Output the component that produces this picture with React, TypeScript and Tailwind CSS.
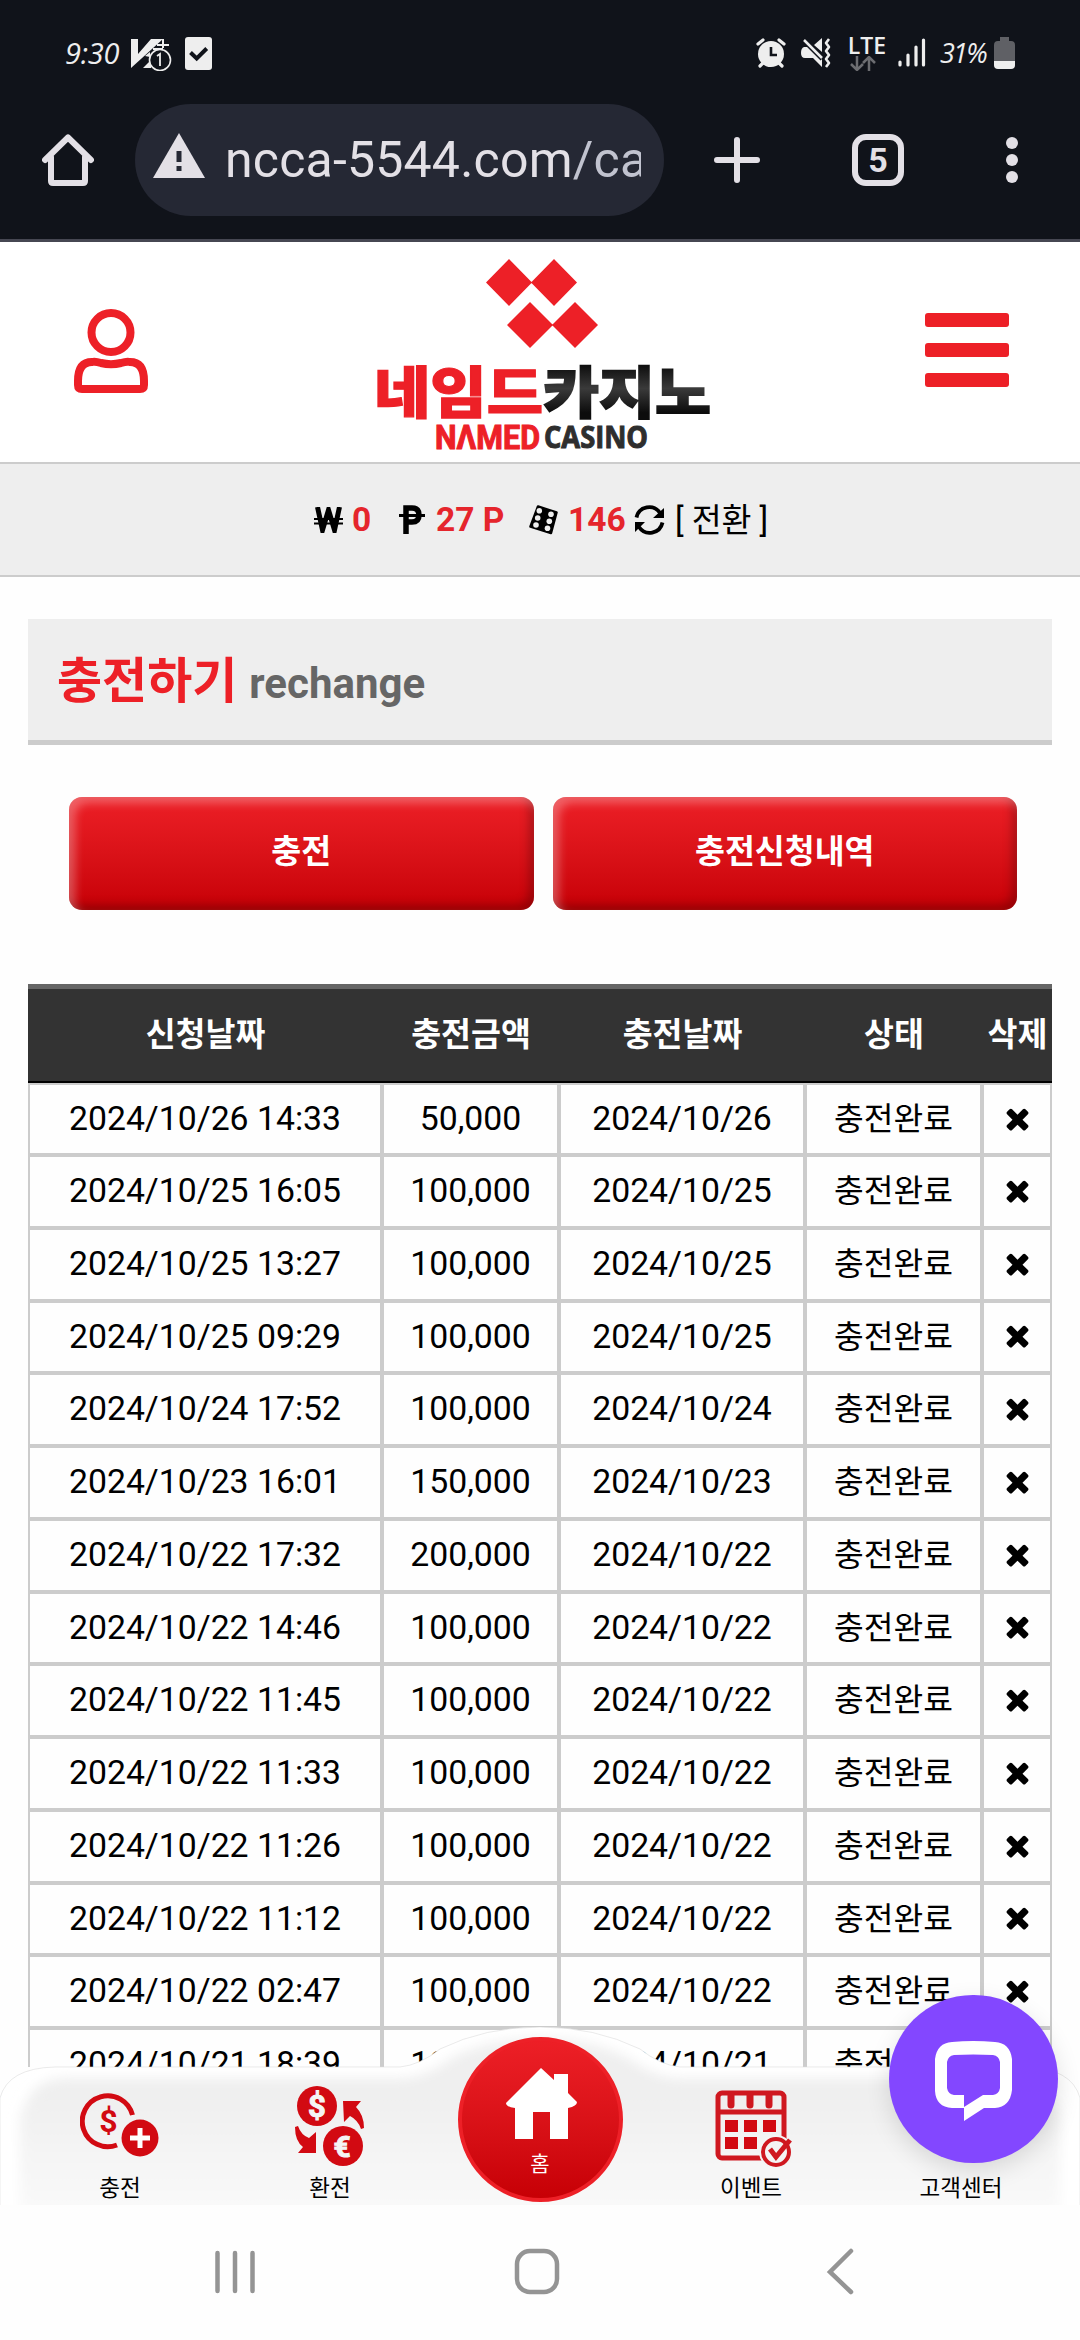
import React from "react";

const rows = [
  ["2024/10/26 14:33", "50,000", "2024/10/26"],
  ["2024/10/25 16:05", "100,000", "2024/10/25"],
  ["2024/10/25 13:27", "100,000", "2024/10/25"],
  ["2024/10/25 09:29", "100,000", "2024/10/25"],
  ["2024/10/24 17:52", "100,000", "2024/10/24"],
  ["2024/10/23 16:01", "150,000", "2024/10/23"],
  ["2024/10/22 17:32", "200,000", "2024/10/22"],
  ["2024/10/22 14:46", "100,000", "2024/10/22"],
  ["2024/10/22 11:45", "100,000", "2024/10/22"],
  ["2024/10/22 11:33", "100,000", "2024/10/22"],
  ["2024/10/22 11:26", "100,000", "2024/10/22"],
  ["2024/10/22 11:12", "100,000", "2024/10/22"],
  ["2024/10/22 02:47", "100,000", "2024/10/22"],
  ["2024/10/21 18:39", "100,000", "2024/10/21"],
];

const cols = "grid grid-cols-[354px_177px_246px_177px_70px]";

function StatusBar() {
  return (
    <div className="flex h-[104px] items-start justify-between pl-[65px] pr-[65px] pt-[36px] text-[#eee]">
      <div className="flex items-start">
        <span className="mt-[1px] w-[66px] font-['Open_Sans','Roboto',sans-serif] text-[29px] italic leading-[32px] tracking-[-0.2px]">9:30</span>
        <svg width="42" height="34" viewBox="0 0 42 34" className="mt-[1px]">
          <path d="M0 2h7v15L20 2h12L0 31z" fill="#eee" />
          <path d="M12 31l8-8v8zM14 19l5-4v5z" fill="#eee" />
          <path d="M32 2v9M26 8h12M22 12h10" stroke="#eee" strokeWidth="2" />
          <circle cx="29" cy="23" r="10.500" fill="#10131a" stroke="#eee" strokeWidth="1.600" />
          <path d="M26 19l3-2v12" stroke="#eee" strokeWidth="1.800" fill="none" />
        </svg>
        <svg width="27" height="34" viewBox="0 0 27 34" className="ml-[12px] mt-[1px]">
          <rect width="27" height="33" rx="3" fill="#eee" />
          <path d="M5.500 15.500l6.200 6 10-10" stroke="#10131a" strokeWidth="4" fill="none" />
        </svg>
      </div>
      <div className="flex items-start">
        <svg width="30" height="30" viewBox="0 0 30 30" className="mt-[2px]">
          <circle cx="15" cy="16" r="13" fill="#eee" />
          <path d="M2 6l5-4M28 6l-5-4M4 28l3-3M26 28l-3-3" stroke="#eee" strokeWidth="3.200" strokeLinecap="round" />
          <path d="M15 9v8h6" stroke="#10131a" strokeWidth="2.600" fill="none" />
        </svg>
        <svg width="31" height="30" viewBox="0 0 31 30" className="ml-[15px] mt-[2px]">
          <path d="M3 9h6l12 12v8l-9-9H4q-4 0-4-5t3-6zM13 7l8-7v14z" fill="#eee" />
          <path d="M2 2l19 19" stroke="#10131a" strokeWidth="4" />
          <path d="M3 2l18 18" stroke="#eee" strokeWidth="2.500" />
          <path d="M28 1l-3 4 3 4-3 4 3 4-3 4 3 4-3 4" stroke="#eee" strokeWidth="2.600" fill="none" strokeLinejoin="round" />
        </svg>
        <div className="ml-[15px] w-[40px] text-center">
          <div className="font-['Open_Sans','Roboto',sans-serif] text-[23px] font-semibold leading-[18px]">LTE</div>
          <svg width="28" height="15" viewBox="0 0 28 15" className="ml-[3px] mt-[2px]" fill="none" stroke="#6c6d71" strokeWidth="2.500">
            <path d="M7 0v13M1 8l6 6 6-6M19 15V2M13 7l6-6 6 6" />
          </svg>
        </div>
        <svg width="28" height="32" viewBox="0 0 28 32" className="ml-[11px]" stroke="#eee" strokeWidth="3.200" strokeLinecap="round">
          <path d="M2 26v3M10 19v10M18 11v18M25.500 4v25" />
        </svg>
        <span className="ml-[14px] mt-[1px] w-[54px] font-['Open_Sans','Roboto',sans-serif] text-[27px] italic leading-[32px] tracking-[-1.8px]">31%</span>
        <svg width="21" height="32" viewBox="0 0 21 32" className="mt-[1px]">
          <path d="M6 0h9v4h2q4 0 4 4v19q0 4-4 4H4q-4 0-4-4V8q0-4 4-4h2z" fill="#5f6065" />
          <path d="M0 24h21v4q0 4-4 4H4q-4 0-4-4z" fill="#eee" />
        </svg>
      </div>
    </div>
  );
}

function BrowserBar() {
  return (
    <div className="flex h-[135px] items-start text-[#e3e0e6]">
      <svg width="52" height="52" viewBox="0 0 52 52" className="ml-[42px] mt-[30px]" fill="none" stroke="currentColor" strokeWidth="6" strokeLinecap="round" strokeLinejoin="round">
        <path d="M3 26L26 3.500 49 26M9 23v24q0 2 2 2h30q2 0 2-2V23" />
      </svg>
      <div className="ml-[41px] flex h-[112px] w-[529px] items-center rounded-full bg-[#252834] pl-[18px]">
        <svg width="52" height="46" viewBox="0 0 52 46" className="mb-[8px]">
          <path d="M26 0l26 45H0z" fill="currentColor" />
          <path d="M26 18v11M26 33v5" stroke="#252834" strokeWidth="5" />
        </svg>
        <div className="ml-[20px] w-[416px] overflow-hidden whitespace-nowrap font-['Roboto',sans-serif] text-[50px] leading-[64px] tracking-[0.2px]">
          ncca-5544.com<span className="text-[#c1c3cf]">/ca</span>
        </div>
      </div>
      <svg width="46" height="46" viewBox="0 0 46 46" className="ml-[50px] mt-[33px]" stroke="currentColor" strokeWidth="6" strokeLinecap="round">
        <path d="M23 3v40M3 23h40" />
      </svg>
      <div className="ml-[92px] mt-[30px] flex h-[52px] w-[52px] items-center justify-center rounded-[14px] border-[6px] border-[#e3e0e6] font-['Roboto',sans-serif] text-[34px] font-bold">5</div>
      <div className="ml-[102px] mt-[33px] flex flex-col gap-[5px]">
        <i className="h-3 w-3 rounded-full bg-[#e3e0e6]" />
        <i className="h-3 w-3 rounded-full bg-[#e3e0e6]" />
        <i className="h-3 w-3 rounded-full bg-[#e3e0e6]" />
      </div>
    </div>
  );
}

function Logo() {
  return (
    <svg width="344" height="208" viewBox="0 0 344 208" fontFamily="'Noto Sans CJK KR', sans-serif">
      <defs>
        <linearGradient id="ink" x1="0" y1="0" x2="0" y2="1">
          <stop offset="0.200" stopColor="#0c0c0c" />
          <stop offset="0.500" stopColor="#3a3a3a" />
          <stop offset="0.800" stopColor="#0c0c0c" />
        </linearGradient>
      </defs>
      <path d="M139 7l23 23.500-23 23.500-23-23.500zM184 7l23 23.500-23 23.500-23-23.500zM160 50l23 23-23 23-23-23zM205 50l23 23-23 23-23-23z" fill="#ed2027" />
      <text x="4" y="161" fontSize="56" fontWeight="900" textLength="169" lengthAdjust="spacingAndGlyphs" fill="#ed2027" stroke="#ed2027" strokeWidth="1.200">네임드</text>
      <text x="173" y="161" fontSize="56" fontWeight="900" textLength="168" lengthAdjust="spacingAndGlyphs" fill="url(#ink)" stroke="url(#ink)" strokeWidth="1.600">카지노</text>
      <text x="65" y="197" fontSize="33" fontWeight="700" fontFamily="Roboto, sans-serif" textLength="105" lengthAdjust="spacingAndGlyphs" fill="#ed2027" stroke="#ed2027">NΛMED</text>
      <text x="174" y="196" fontSize="30" fontWeight="700" fontFamily="'Open Sans', sans-serif" textLength="104" lengthAdjust="spacingAndGlyphs" fill="#2e2e2e" stroke="#2e2e2e">CASINO</text>
    </svg>
  );
}

function Header() {
  return (
    <header className="flex h-[222px] items-start border-b-2 border-[#ccc] bg-white">
      <svg width="76" height="86" viewBox="0 0 76 86" className="ml-[74px] mt-[66px]" fill="none" stroke="#ed2027" strokeWidth="8">
        <circle cx="37" cy="24.500" r="19.500" />
        <path d="M4 73q0-19 14-19 3-1 9 1 10 2.500 20 0 6-2 9-1 14 0 14 19v4q0 4-4 4H8q-4 0-4-4z" />
      </svg>
      <div className="ml-[220px] mt-[10px]"><Logo /></div>
      <div className="ml-[211px] mt-[71px] flex flex-col gap-[16px]">
        <i className="h-[14px] w-[84px] rounded-[3px] bg-[#ed2027]" />
        <i className="h-[14px] w-[84px] rounded-[3px] bg-[#ed2027]" />
        <i className="h-[14px] w-[84px] rounded-[3px] bg-[#ed2027]" />
      </div>
    </header>
  );
}

function Dice() {
  return (
    <svg width="30" height="30" viewBox="0 0 30 30">
      <path d="M9 1.500l18.500 6L22 28 1.500 21.500z" stroke="#000" strokeWidth="2.500" strokeLinejoin="round" />
      <g fill="#eee">
        <circle cx="10.300" cy="5.700" r="2.800" /><circle cx="8.700" cy="13" r="2.800" /><circle cx="7" cy="20" r="2.800" />
        <circle cx="22" cy="9.300" r="2.800" /><circle cx="20.300" cy="16.300" r="2.800" /><circle cx="18.500" cy="23.300" r="2.800" />
      </g>
    </svg>
  );
}

function Balance() {
  return (
    <div className="flex h-[113px] items-center border-b-2 border-[#ccc] bg-[#eee] pl-[314px] text-[33.5px] leading-[40px]">
      <svg width="29" height="26" viewBox="0 0 29 26" className="mt-[1px]" fill="none" stroke="#000">
        <path d="M3.500 0l5 23 6-20 6 20 5-23" strokeWidth="5" />
        <path d="M0 12h29M0 16.500h29" strokeWidth="2" />
      </svg>
      <b className="ml-[9px] w-[37px] text-[#e5252c]">0</b>
      <svg width="26" height="29" viewBox="0 0 26 29" className="ml-[10px]" fill="none" stroke="#000">
        <path d="M7 29V3h6q7 0 7 7t-7 7H7" strokeWidth="5.500" />
        <path d="M0 10.500h26" strokeWidth="3" />
      </svg>
      <b className="ml-[11px] w-[93px] text-[#e5252c]">27 P</b>
      <Dice />
      <b className="ml-[9px] w-[66px] text-[#e5252c]">146</b>
      <svg width="31" height="30" viewBox="0 0 31 30" fill="none" stroke="#000" strokeWidth="3.800">
        <path d="M2.500 12.500A13 13 0 0 1 26 8M28.500 17.500A13 13 0 0 1 5 22" />
        <path d="M30 3v10H19zM1 27V17h10z" fill="#000" stroke="none" />
      </svg>
      <span className="ml-[10px] mt-[2px] whitespace-pre text-[32.5px]">[ 전환 ]</span>
    </div>
  );
}

function GlossButton({ children }: { children: React.ReactNode }) {
  return (
    <button className="h-[113px] flex-1 rounded-[13px] bg-linear-to-b from-[#ed1f26] to-[#c70005] pb-[3px] text-[32.5px] font-bold text-white shadow-[inset_6px_6px_10px_rgba(255,255,255,0.3),inset_-5px_-5px_10px_rgba(0,0,0,0.25)]">
      {children}
    </button>
  );
}

function HistoryTable() {
  return (
    <div className="mt-[74px] w-[1024px]">
      <div className={`${cols} h-[99px] items-center border-t-[5px] border-b-2 border-t-[#666] border-b-black bg-[#333] text-center text-[32.5px] font-bold text-white`}>
        {["신청날짜", "충전금액", "충전날짜", "상태", "삭제"].map((h) => (
          <div key={h} className="whitespace-nowrap pt-[1px] pl-[1px]">{h}</div>
        ))}
      </div>
      {rows.map(([date, amount, day], i) => (
        <div
          key={date}
          className={`${cols} ${i === 0 ? "h-[72px]" : "h-[72.75px]"} text-center text-[33.75px] leading-[68px] *:border-2 *:border-[#ccc]`}
        >
          <div>{date}</div>
          <div>{amount}</div>
          <div>{day}</div>
          <div className="text-[32.3px]">충전완료</div>
          <div className="flex items-center justify-center pb-[2px]">
            <svg width="33" height="33" viewBox="0 0 1792 1792">
              <path d="M1490 1322q0 40-28 68l-136 136q-28 28-68 28t-68-28l-294-294-294 294q-28 28-68 28t-68-28l-136-136q-28-28-28-68t28-68l294-294-294-294q-28-28-28-68t28-68l136-136q28-28 68-28t68 28l294 294 294-294q28-28 68-28t68 28l136 136q28 28 28 68t-28 68l-294 294 294 294q28 28 28 68z" />
            </svg>
          </div>
        </div>
      ))}
    </div>
  );
}

function TabShape() {
  const d = "M0 180V71Q8 41 55 40H400Q420 38 440 22 485 0 540 0T640 22Q660 38 680 40H1025Q1072 41 1080 71V180z";
  return (
    <svg width="1080" height="178" viewBox="0 0 1080 178" className="absolute inset-0">
      <defs>
        <linearGradient id="bar" x1="0" y1="0" x2="0" y2="1">
          <stop offset="0.300" stopColor="#efefef" />
          <stop offset="1" stopColor="#fafafa" />
        </linearGradient>
        <filter id="soft" x="-5%" y="-10%" width="110%" height="120%">
          <feGaussianBlur stdDeviation="6" />
        </filter>
        <clipPath id="edge"><path d={d} /></clipPath>
      </defs>
      <path d={d} fill="#fff" stroke="#dcdcdc" strokeWidth="0.600" />
      <g clipPath="url(#edge)">
        <path d="M20 190V92Q28 54 62 51H405Q430 48 450 32 490 11 540 11T630 32Q650 48 675 51H1018Q1052 54 1060 92V190z" fill="url(#bar)" filter="url(#soft)" />
      </g>
    </svg>
  );
}

function DepositIcon() {
  return (
    <svg width="80" height="66" viewBox="0 0 80 66">
      <path d="M52.500 22A25.500 25.500 0 1 0 37 52" fill="none" stroke="#d20a12" strokeWidth="5" />
      <text x="28.500" y="39" textAnchor="middle" fontFamily="Roboto, sans-serif" fontWeight="700" fontSize="32" fill="#d20a12">$</text>
      <circle cx="60" cy="45" r="18.500" fill="#d20a12" />
      <path d="M60 35v20M50 45h20" stroke="#fff" strokeWidth="5" />
    </svg>
  );
}

function ExchangeIcon() {
  return (
    <svg width="70" height="80" viewBox="0 0 70 80" fill="#d20a12">
      <circle cx="22" cy="20" r="20" />
      <circle cx="48" cy="60" r="20" />
      <g fill="#f5f5f5" stroke="#f5f5f5" fontFamily="Roboto, sans-serif" fontWeight="700" textAnchor="middle">
        <text x="22" y="31" fontSize="31">$</text>
        <text x="47" y="71" fontSize="30">€</text>
      </g>
      <path d="M48 15h18l-5 6q8 8 8 21l-3 1q-3-9-11-13l-6 6z" />
      <path d="M21 67H3l5-6q-8-6-8-20l3-1q3 9 11 12l7-6z" />
    </svg>
  );
}

function EventIcon() {
  return (
    <svg width="78" height="80" viewBox="0 0 78 80" fill="none" stroke="#cf1820">
      <rect x="4" y="6" width="66" height="65" rx="4" strokeWidth="5" />
      <path d="M4 25h66" strokeWidth="5" />
      <path d="M17 8v10M36 8v10M55 8v10" strokeWidth="7" strokeLinecap="round" />
      <path d="M11 33h13v12H11zM30 33h13v12H30zM49 33h13v12H49zM11 50h13v12H11zM30 50h13v12H30z" fill="#d20a12" stroke="none" />
      <circle cx="62" cy="65" r="17" fill="#f4f4f4" stroke="none" />
      <circle cx="62" cy="65" r="13" strokeWidth="4" />
      <path d="M56 62l6 8 14-17" strokeWidth="5" />
    </svg>
  );
}

function TabBar() {
  return (
    <nav className="absolute top-[2027px] left-0 h-[178px] w-[1080px] text-[22.5px] leading-[30px] text-black">
      <TabShape />
      <div className="relative grid h-full grid-cols-5 px-[15px] text-center">
        <div className="flex flex-col items-center pt-[66px]">
          <DepositIcon />
          <span className="mt-[14px]">충전</span>
        </div>
        <div className="flex flex-col items-center pt-[59px]">
          <ExchangeIcon />
          <span className="mt-[7px]">환전</span>
        </div>
        <div className="flex justify-center pt-[10px]">
          <div className="flex h-[165px] w-[165px] flex-col items-center rounded-full border-[4.500px] border-[#ed2027] bg-linear-to-b from-[#ed1f26] to-[#c70005] text-[21px] text-white">
            <svg width="74" height="74" viewBox="0 0 74 74" className="ml-[2px] mt-[26px]">
              <path d="M37 1l13 12V7h14v19l9 9q0 4-9 6v31H46V45H29v27H11V41q-9-1-9-5z" fill="#fff" />
            </svg>
            <span className="mt-[8px]">홈</span>
          </div>
        </div>
        <div className="flex flex-col items-center pt-[60px] pl-[2px]">
          <div className="pl-[4px]"><EventIcon /></div>
          <span className="mt-[6px]">이벤트</span>
        </div>
        <div className="flex flex-col items-center pt-[146px] pl-[2px]">
          <span>고객센터</span>
        </div>
      </div>
    </nav>
  );
}

export default function App() {
  return (
    <div className="relative flex h-[2340px] w-[1080px] flex-col overflow-hidden bg-[#fefefe] font-['Roboto','Noto_Sans_CJK_KR',sans-serif] text-black">
      <div className="h-[242px] border-b-[3px] border-[#464752] bg-[#10131a]">
        <StatusBar />
        <BrowserBar />
      </div>
      <Header />
      <Balance />
      <main className="h-[1490px] overflow-hidden px-[28px] pt-[42px]">
        <h1 className="flex h-[126px] items-baseline border-b-[5px] border-[#ccc] bg-[#eee] pl-[29px] pt-[27px] text-[49px] font-bold leading-[72px] text-[#ed2027]">
          충전하기<small className="ml-[12px] text-[42px] text-[#666]">rechange</small>
        </h1>
        <div className="mt-[52px] flex gap-[19px] pl-[41px] pr-[35px]">
          <GlossButton>충전</GlossButton>
          <GlossButton>충전신청내역</GlossButton>
        </div>
        <HistoryTable />
      </main>
      <TabBar />
      <div className="absolute left-[889px] top-[1995px] flex h-[168px] w-[169px] items-center justify-center rounded-full bg-[#8347ff] shadow-[0_8px_24px_rgba(0,0,0,0.12)]">
        <svg width="79" height="80" viewBox="0 0 79 80" className="mt-[4px]">
          <path fillRule="evenodd" fill="#fff" d="M18 1q21-2 43 0 15 1 17 17v31q-2 17-17 18h-11L30 80V67H18Q2 66 1 50V18Q3 2 18 1zM20 14q-6 1-7 7v26q1 6 7 7h10v12l19-12h10q6-1 7-7V21q-1-6-7-7-20-1-39 0z" />
        </svg>
      </div>
      <div className="mt-auto flex h-[135px] items-start pt-[43px]">
        <svg width="1080" height="48" viewBox="0 0 1080 48" fill="none" stroke="#949494" strokeWidth="4.500" strokeLinecap="round">
          <path d="M217.500 5v38M235 5v38M252.500 5v38" />
          <rect x="517" y="3" width="40" height="41" rx="13" />
          <path d="M851 3l-21 21 21 20" />
        </svg>
      </div>
    </div>
  );
}
